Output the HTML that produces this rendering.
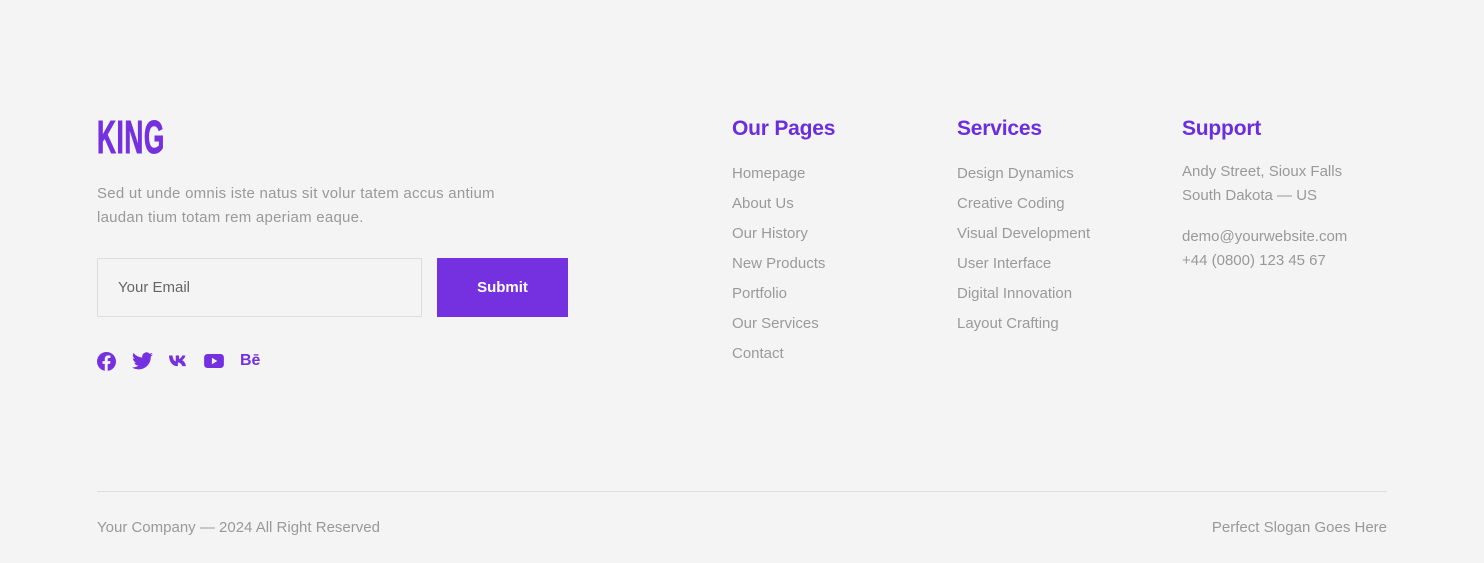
<!DOCTYPE html>
<html><head><meta charset="utf-8"><style>
*{margin:0;padding:0;box-sizing:border-box}
body{width:1484px;height:563px;background:#f4f4f4;font-family:"Liberation Sans",sans-serif;position:relative;overflow:hidden;color:#999}
.a{position:absolute}
.logo{left:97px;top:113px;font-size:46px;font-weight:bold;color:#7531e0;transform:scaleX(0.57);transform-origin:left top;letter-spacing:1px;line-height:48px;-webkit-text-stroke:1px #7531e0}
.p{font-size:15px;line-height:24px;color:#999}
h3{position:absolute;font-size:21px;font-weight:bold;color:#6a2ee0;letter-spacing:-0.2px;top:117px}
ul{list-style:none;position:absolute;top:159px}
ul li{font-size:15px;line-height:30px;color:#9a9a9a}
.email{left:97px;top:258px;width:325px;height:59px;border:1px solid #ddd;font-size:15px;color:#666;padding:20px 0 0 20px}
.btn{left:437px;top:258px;width:131px;height:59px;background:#7531e0;color:#fff;font-weight:bold;font-size:15px;text-align:center;line-height:59px}
.line{left:97px;top:491px;width:1290px;height:1px;background:#dcdcdc}
svg{position:absolute;top:352px}
</style></head><body>
<div class="a logo">KING</div>
<div class="a p" style="left:97px;top:182px;letter-spacing:0.25px">Sed ut unde omnis iste natus sit volur tatem accus antium<br>laudan tium totam rem aperiam eaque.</div>
<div class="a email">Your Email</div>
<div class="a btn">Submit</div>
<svg style="left:97px" width="19" height="19" viewBox="0 0 24 24"><circle cx="12" cy="12" r="12" fill="#7531e0"/><path d="M13.5 24V15h3l.5-3.5h-3.5V9.3c0-1 .3-1.7 1.8-1.7H17V4.5c-.3 0-1.4-.2-2.7-.2-2.7 0-4.5 1.6-4.5 4.6v2.6H7V15h2.8v9z" fill="#f4f4f4"/></svg>
<svg style="left:132px" width="21" height="18" viewBox="0 0 24 20"><path d="M24 2.4a10 10 0 0 1-2.8.8A5 5 0 0 0 23.3.5a10 10 0 0 1-3.1 1.2A4.9 4.9 0 0 0 11.8 6 14 14 0 0 1 1.7.9a4.9 4.9 0 0 0 1.5 6.6A4.9 4.9 0 0 1 1 6.9a4.9 4.9 0 0 0 3.9 4.8 5 5 0 0 1-2.2.1 4.9 4.9 0 0 0 4.6 3.4A9.9 9.9 0 0 1 0 17.3 14 14 0 0 0 7.5 19.5c9 0 14-7.5 14-14v-.6A10 10 0 0 0 24 2.4z" fill="#7531e0"/></svg>
<svg style="left:169px;top:355px" width="19" height="12" viewBox="0 0 24 14"><path d="M0 0h4.5c.2 5 2.4 7 4 7.5V0h4.2v4.3C14.3 4.1 16 2.2 16.6 0h4.2c-.7 3-2.8 5-4.3 5.9 1.5.7 4 2.6 4.9 7.6h-4.6c-.8-2.6-2.9-4.5-5.6-4.8v4.8h-.5C4.4 13.5.3 8.4 0 0z" fill="#7531e0"/></svg>
<svg style="left:204px;top:354px" width="20" height="14" viewBox="0 0 24 17"><rect width="24" height="17" rx="4" fill="#7531e0"/><path d="M9.5 4.5v8l6.5-4z" fill="#f4f4f4"/></svg>
<div class="a" style="left:240px;top:352px;font-size:16px;font-weight:bold;color:#7531e0">Bē</div>
<h3 style="left:732px">Our Pages</h3>
<h3 style="left:957px">Services</h3>
<h3 style="left:1182px">Support</h3>
<ul style="left:732px"><li>Homepage</li><li>About Us</li><li>Our History</li><li>New Products</li><li>Portfolio</li><li>Our Services</li><li>Contact</li></ul>
<ul style="left:957px"><li>Design Dynamics</li><li>Creative Coding</li><li>Visual Development</li><li>User Interface</li><li>Digital Innovation</li><li>Layout Crafting</li></ul>
<div class="a p" style="left:1182px;top:160px">Andy Street, Sioux Falls<br>South Dakota — US</div>
<div class="a p" style="left:1182px;top:225px">demo@yourwebsite.com<br>+44 (0800) 123 45 67</div>
<div class="a line"></div>
<div class="a p" style="left:97px;top:516px">Your Company — 2024 All Right Reserved</div>
<div class="a p" style="right:97px;top:516px">Perfect Slogan Goes Here</div>
</body></html>
